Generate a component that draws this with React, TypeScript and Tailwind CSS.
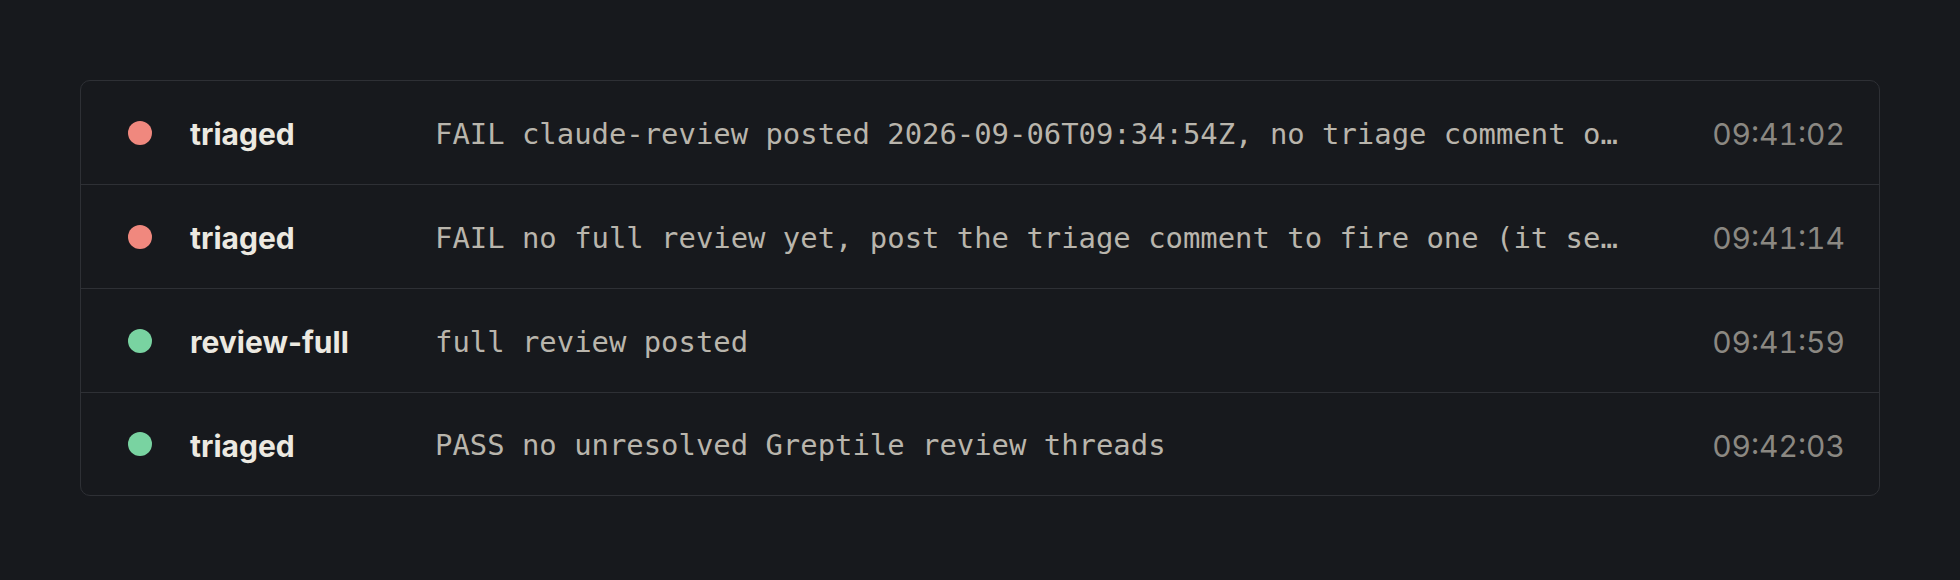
const rows = [
  { ok: false, label: 'triaged', msg: 'FAIL claude-review posted 2026-09-06T09:34:54Z, no triage comment on the PR since then, post one to trigger a full review', time: '09:41:02' },
  { ok: false, label: 'triaged', msg: 'FAIL no full review yet, post the triage comment to fire one (it sets the review-full label)', time: '09:41:14' },
  { ok: true, label: 'review-full', msg: 'full review posted', time: '09:41:59' },
  { ok: true, label: 'triaged', msg: 'PASS no unresolved Greptile review threads', time: '09:42:03' },
]

export default function App() {
  return (
    <div className="min-h-[580px] w-full bg-[#17191d] pt-[80px] px-[80px]">
      <div className="rounded-[10px] border border-[#2e3035] bg-[#17191d]">
        {rows.map((r, i) => (
          <div
            key={i}
            className={`flex items-center pl-[47px] pr-[34px] ${
              i < rows.length - 1 ? 'h-[104px] border-b border-[#2e3035]' : 'h-[102px]'
            }`}
          >
            <span
              className={`w-6 h-6 rounded-full shrink-0 ${r.ok ? 'bg-[#79d3a1]' : 'bg-[#f0887e]'}`}
            />
            <span className="ml-[38px] w-[245px] shrink-0 pt-[4px] font-['Inter',sans-serif] font-bold text-[30px] text-[#ece9e1]">
              {r.label}
            </span>
            <span className="flex-1 min-w-0 truncate pt-[4px] font-['DejaVu_Sans_Mono',monospace] text-[28.9px] text-[#b9b5ac]">
              {r.msg}
            </span>
            <span className="ml-[90px] shrink-0 pt-[4px] font-['Inter',sans-serif] text-[30px] tabular-nums text-[#8b8882]">
              {r.time}
            </span>
          </div>
        ))}
      </div>
    </div>
  )
}
